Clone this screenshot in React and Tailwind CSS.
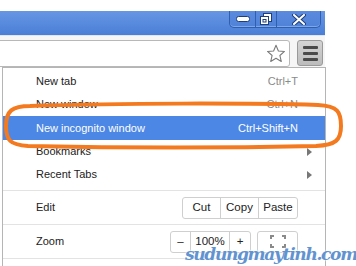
import React from 'react';

const rows = [
    { label: 'New tab', shortcut: 'Ctrl+T' },
    { label: 'New window', shortcut: 'Ctrl+N' },
    { label: 'New incognito window', shortcut: 'Ctrl+Shift+N', active: true },
    { label: 'Bookmarks', arrow: true },
    { label: 'Recent Tabs', arrow: true },
];

const Arrow = () => (
    <svg width="5" height="8" viewBox="0 0 5 8" className="mr-[-14px]">
        <path d="M0 0 L5 4 L0 8 Z" fill="#777" />
    </svg>
);

const App = () => {
    return (
        <div className="relative w-[356px] h-[266px] overflow-hidden bg-white font-['Liberation_Sans',sans-serif] text-[11px] text-[#222]">
            <div className="h-[11px]" />

            {/* title bar */}
            <div className="w-[325px] h-[24px] bg-gradient-to-b from-[#6796e3] to-[#4a7fd7] flex justify-end pr-[4px]">
                <div className="flex h-[17px] border border-t-0 border-[#2f5faf] rounded-b-[5px] bg-gradient-to-b from-[#5b8ade] to-[#4f82d8] shadow-[inset_0_-1px_0_#7ea6e8]">
                    <div className="w-[26px] flex items-center justify-center border-r border-[#2f5faf]">
                        <svg width="14" height="6" viewBox="0 0 14 6">
                            <rect x="0.5" y="0.5" width="13" height="5" rx="2" fill="#fff" stroke="#1f3f78" />
                        </svg>
                    </div>
                    <div className="w-[21px] flex items-center justify-center border-r border-[#2f5faf]">
                        <svg width="12" height="12" viewBox="0 0 12 12">
                            <rect x="3.5" y="0.5" width="8" height="8" fill="#fff" stroke="#1f3f78" />
                            <rect x="0.5" y="3.5" width="8" height="8" fill="#fff" stroke="#1f3f78" />
                            <rect x="3" y="6.5" width="3" height="2.5" fill="none" stroke="#1f3f78" />
                        </svg>
                    </div>
                    <div className="w-[43px] flex items-center justify-center">
                        <svg width="14" height="11" viewBox="0 0 14 11">
                            <path d="M2 1 L12 10 M12 1 L2 10" stroke="#1f3f78" strokeWidth="4" strokeLinecap="round" />
                            <path d="M2 1 L12 10 M12 1 L2 10" stroke="#fff" strokeWidth="2" strokeLinecap="round" />
                        </svg>
                    </div>
                </div>
            </div>

            {/* toolbar */}
            <div className="w-[325px] h-[32px] bg-[#f6f6f6] border-t border-[#dfe6f2] flex items-end">
                <div className="ml-[-4px] w-[294px] h-[27px] bg-white border border-[#b8b8b8] rounded-r-[3px] flex items-center justify-end pr-[3px]">
                    <svg width="20" height="19" viewBox="0 0 24 23">
                        <path d="M12 1.5 L14.9 8.4 L22.3 9 L16.7 13.9 L18.4 21.2 L12 17.3 L5.6 21.2 L7.3 13.9 L1.7 9 L9.1 8.4 Z" fill="#fff" stroke="#7a7a7a" strokeWidth="1.3" strokeLinejoin="round" />
                    </svg>
                </div>
                <div className="ml-[7px] mb-px w-[26px] h-[26px] rounded-[3px] border border-[#9a9a9a] bg-gradient-to-b from-[#d4d4d4] to-[#bcbcbc] flex flex-col items-center justify-center gap-[3px]">
                    <div className="w-[15px] h-[3px] rounded-[1px] bg-[#4a4a4a]" />
                    <div className="w-[15px] h-[3px] rounded-[1px] bg-[#4a4a4a]" />
                    <div className="w-[15px] h-[3px] rounded-[1px] bg-[#4a4a4a]" />
                </div>
            </div>

            {/* menu */}
            <div className="ml-[2px] w-[324px] border-l border-r border-t border-[#b5b5b5] bg-white pt-[2px]">
                {rows.map((row, i) => (
                    <div
                        key={i}
                        className={`flex items-center justify-between pl-[33px] pr-[27px] ${row.active ? 'h-[24px] bg-[#4c87e6] text-white' : 'h-[23px]'}`}
                    >
                        <span>{row.label}</span>
                        {row.shortcut && (
                            <span className={row.active ? 'text-white' : 'text-[#8a8a8a]'}>{row.shortcut}</span>
                        )}
                        {row.arrow && <Arrow />}
                    </div>
                ))}
                <div className="h-[4px]" />
                <div className="h-px bg-[#e3e3e3]" />

                <div className="h-[33px] flex items-center justify-between pl-[33px] pr-[27px]">
                    <span>Edit</span>
                    <div className="flex h-[22px] border border-[#cfcfcf] rounded-[3px] text-[11.5px]">
                        <div className="w-[38px] flex items-center justify-center border-r border-[#cfcfcf]">Cut</div>
                        <div className="w-[38px] flex items-center justify-center border-r border-[#cfcfcf]">Copy</div>
                        <div className="w-[38px] flex items-center justify-center">Paste</div>
                    </div>
                </div>
                <div className="h-px bg-[#e3e3e3]" />

                <div className="h-[33px] flex items-center justify-between pl-[33px] pr-[27px]">
                    <span>Zoom</span>
                    <div className="flex items-center gap-[6px]">
                        <div className="flex h-[22px] border border-[#cfcfcf] rounded-[3px] text-[11.5px]">
                            <div className="w-[20px] flex items-center justify-center border-r border-[#cfcfcf]">–</div>
                            <div className="w-[39px] flex items-center justify-center border-r border-[#cfcfcf]">100%</div>
                            <div className="w-[20px] flex items-center justify-center">+</div>
                        </div>
                        <div className="w-[41px] h-[22px] border border-[#cfcfcf] rounded-[3px] flex items-center justify-center">
                            <svg width="16" height="13" viewBox="0 0 16 13">
                                <path d="M1 4 V1 H4 M12 1 H15 V4 M15 9 V12 H12 M4 12 H1 V9" fill="none" stroke="#8a8a8a" strokeWidth="2" />
                            </svg>
                        </div>
                    </div>
                </div>
                <div className="h-px bg-[#e3e3e3]" />
                <div className="h-[10px]" />
            </div>

            {/* orange highlight ring */}
            <svg className="absolute left-0 top-0 pointer-events-none" width="356" height="266" viewBox="0 0 356 266">
                <path
                    d="M30 106 C120 103 250 103 318 105 C338 106 341 112 341 126 C341 140 336 145 316 146 C230 148 120 148 28 146 C10 145 6 140 6 126 C6 111 12 106 30 106 Z"
                    fill="none"
                    stroke="#f47a1f"
                    strokeWidth="4"
                />
            </svg>

            {/* watermark */}
            <div className="absolute left-[185px] top-[246px] font-['DejaVu_Serif',serif] font-bold italic text-[17px] leading-none tracking-[-1.3px] text-[#6193d0] [text-shadow:0_0_2px_#fff,0_0_2px_#fff]">
                sudungmaytinh.com
            </div>
        </div>
    );
};

export default App;
